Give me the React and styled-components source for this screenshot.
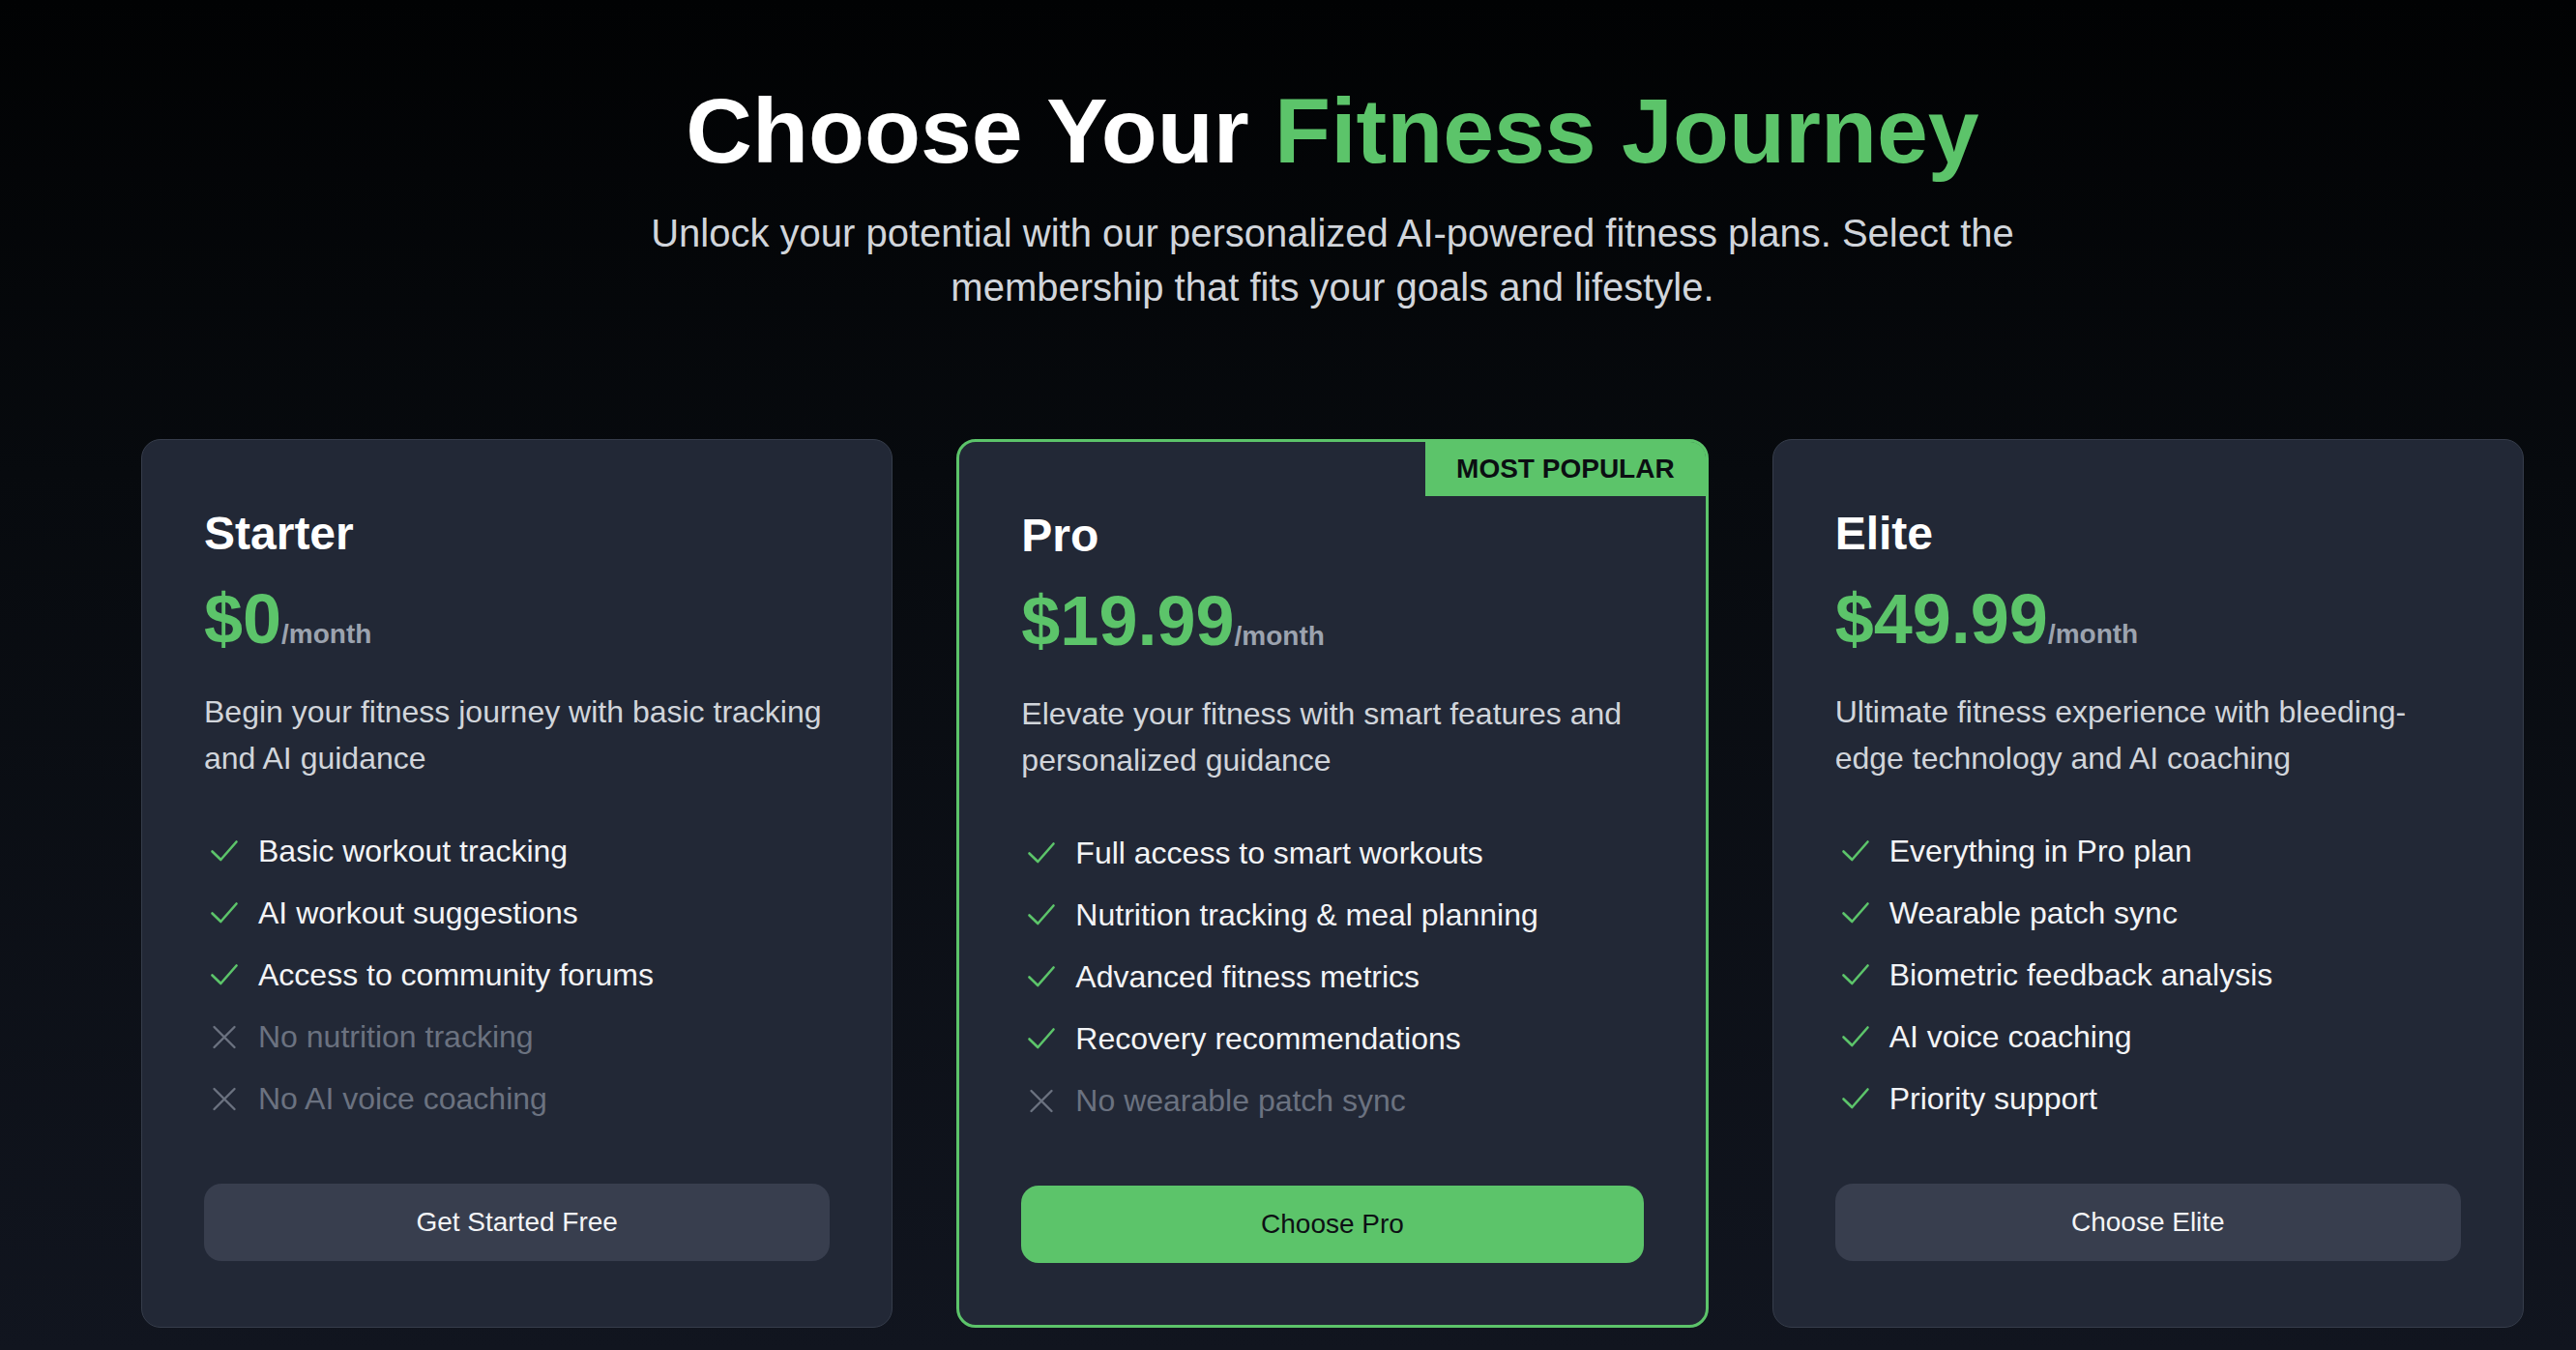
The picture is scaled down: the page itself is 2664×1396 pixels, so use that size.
import React from 'react'
import styled, { createGlobalStyle } from 'styled-components'

const GlobalStyle = createGlobalStyle`
  * { box-sizing: border-box; }
  html, body { margin: 0; padding: 0; }
  body {
    font-family: "Liberation Sans", Arial, Helvetica, sans-serif;
    background: #05070b;
  }
`

const plans = [
  {
    name: 'Starter',
    price: '$0',
    text: 'Begin your fitness journey with basic tracking and AI guidance',
    features: [
      ['Basic workout tracking', true],
      ['AI workout suggestions', true],
      ['Access to community forums', true],
      ['No nutrition tracking', false],
      ['No AI voice coaching', false],
    ],
    cta: 'Get Started Free',
  },
  {
    name: 'Pro',
    price: '$19.99',
    text: 'Elevate your fitness with smart features and personalized guidance',
    features: [
      ['Full access to smart workouts', true],
      ['Nutrition tracking & meal planning', true],
      ['Advanced fitness metrics', true],
      ['Recovery recommendations', true],
      ['No wearable patch sync', false],
    ],
    cta: 'Choose Pro',
    popular: true,
  },
  {
    name: 'Elite',
    price: '$49.99',
    text: 'Ultimate fitness experience with bleeding-edge technology and AI coaching',
    features: [
      ['Everything in Pro plan', true],
      ['Wearable patch sync', true],
      ['Biometric feedback analysis', true],
      ['AI voice coaching', true],
      ['Priority support', true],
    ],
    cta: 'Choose Elite',
  },
]

function Mark({ ok }) {
  return (
    <Icon>
      {ok ? (
        <svg width="32" height="32" viewBox="0 0 32 32" fill="none">
          <polyline points="3.5,16.5 12.3,25 28.5,6.5" stroke="#5cc46a" strokeWidth="2.6" strokeLinecap="round" strokeLinejoin="round" />
        </svg>
      ) : (
        <svg width="32" height="32" viewBox="0 0 32 32" fill="none">
          <path d="M5.5 6 26.5 27M26.5 6 5.5 27" stroke="#6b7280" strokeWidth="2.4" strokeLinecap="round" />
        </svg>
      )}
    </Icon>
  )
}

function App() {
  return (
    <Page>
      <GlobalStyle />
      <Header>
        <Title>
          Choose Your <span>Fitness Journey</span>
        </Title>
        <Subtitle>
          Unlock your potential with our personalized AI-powered fitness plans. Select the membership that fits your goals and lifestyle.
        </Subtitle>
      </Header>

      <Cards>
        {plans.map((p) => (
          <Card key={p.name} $popular={p.popular}>
            {p.popular && <Badge>MOST POPULAR</Badge>}
            <PlanName>{p.name}</PlanName>
            <PriceRow>
              <Price>{p.price}</Price>
              <Per>/month</Per>
            </PriceRow>
            <Desc>{p.text}</Desc>
            <Features>
              {p.features.map(([label, ok]) => (
                <Feature key={label} $ok={ok}>
                  <Mark ok={ok} />
                  {label}
                </Feature>
              ))}
            </Features>
            <Button $primary={p.popular}>{p.cta}</Button>
          </Card>
        ))}
      </Cards>
    </Page>
  )
}

const Page = styled.div`
  min-height: 100vh;
  padding: 78px 54px 0 146px;
  background: linear-gradient(180deg, #010203 0%, #070a0e 35%, #11151f 100%);
  color: #fff;
`

const Header = styled.header`
  display: flex;
  flex-direction: column;
  align-items: center;
  text-align: center;
`

const Title = styled.h1`
  margin: 0;
  font-size: 95px;
  line-height: 114px;
  font-weight: 700;
  color: #fff;

  span {
    color: #5cc46a;
  }
`

const Subtitle = styled.p`
  margin: 21px 0 0;
  max-width: 1480px;
  font-size: 40px;
  line-height: 56px;
  color: #d1d5db;
`

const Cards = styled.div`
  display: grid;
  grid-template-columns: repeat(3, 1fr);
  gap: 66px;
  margin-top: 129px;
`

const Card = styled.div`
  position: relative;
  display: flex;
  flex-direction: column;
  padding: 65px 64px 64px;
  background: #222836;
  border: ${(p) => (p.$popular ? '3px solid #5cc46a' : '1px solid #363d4b')};
  border-radius: 20px;
`

const Badge = styled.div`
  position: absolute;
  top: 0;
  right: 0;
  padding: 14px 32px;
  background: #5cc46a;
  color: #0b0e12;
  font-size: 28px;
  line-height: 28px;
  font-weight: 700;
  border-top-right-radius: 16px;
`

const PlanName = styled.h2`
  margin: 0;
  font-size: 48px;
  line-height: 64px;
  font-weight: 700;
  color: #fff;
`

const PriceRow = styled.div`
  display: flex;
  align-items: baseline;
  height: 80px;
  margin-top: 16px;
`

const Price = styled.span`
  font-size: 72px;
  line-height: 80px;
  font-weight: 700;
  color: #5cc46a;
`

const Per = styled.span`
  font-size: 28px;
  line-height: 28px;
  font-weight: 700;
  color: #9ca3af;
`

const Desc = styled.p`
  margin: 32px 0 0;
  font-size: 32px;
  line-height: 48px;
  color: #d1d5db;
`

const Features = styled.ul`
  list-style: none;
  margin: 48px 0 0;
  padding: 0;
  display: flex;
  flex-direction: column;
  gap: 16px;
`

const Feature = styled.li`
  display: flex;
  align-items: center;
  font-size: 32px;
  line-height: 48px;
  color: ${(p) => (p.$ok ? '#f3f4f6' : '#6b7280')};
`

const Icon = styled.span`
  display: flex;
  align-items: center;
  justify-content: center;
  flex: none;
  width: 32px;
  height: 32px;
  margin: 0 19px 0 5px;
`

const Button = styled.button`
  margin-top: 64px;
  height: 80px;
  width: 100%;
  border: none;
  border-radius: 18px;
  font-family: inherit;
  font-size: 28px;
  background: ${(p) => (p.$primary ? '#5cc46a' : '#383e4e')};
  color: ${(p) => (p.$primary ? '#0d1014' : '#f3f4f6')};
  cursor: pointer;
`

export default App
